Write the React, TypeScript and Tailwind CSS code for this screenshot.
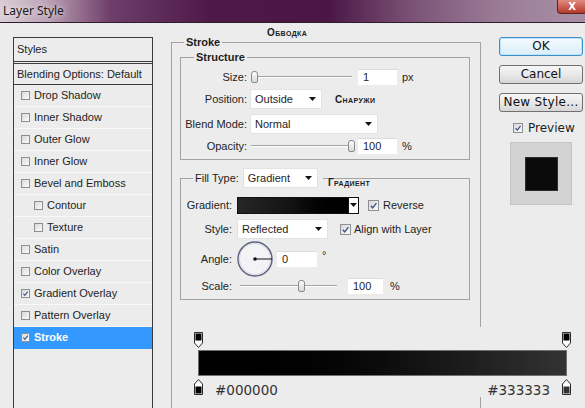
import type { ReactNode } from "react";

const LEFT_ITEMS: { label: string; on?: boolean; indent?: boolean; active?: boolean }[] = [
  { label: "Drop Shadow" },
  { label: "Inner Shadow" },
  { label: "Outer Glow" },
  { label: "Inner Glow" },
  { label: "Bevel and Emboss" },
  { label: "Contour", indent: true },
  { label: "Texture", indent: true },
  { label: "Satin" },
  { label: "Color Overlay" },
  { label: "Gradient Overlay", on: true },
  { label: "Pattern Overlay" },
  { label: "Stroke", on: true, active: true },
];

function Tick() {
  return (
    <svg viewBox="0 0 10 10" className="w-full h-full">
      <path d="M2 5.3 L4.1 7.6 L8.2 2.3" fill="none" stroke="#3f558f" strokeWidth="1.6" />
    </svg>
  );
}

function Check({ on, size }: { on?: boolean; size: "sm" | "md" | "lg" }) {
  const box =
    size === "sm" ? "w-[9px] h-[9px]" : size === "md" ? "w-[10px] h-[10px]" : "w-[11px] h-[11px]";
  return (
    <span
      className={`${box} shrink-0 flex border border-[#8e8f8f] bg-gradient-to-br from-[#d9d9d9] to-[#fbfbfb]`}
    >
      {on && <Tick />}
    </span>
  );
}

function Arrow() {
  return (
    <svg width="7" height="4" viewBox="0 0 7 4" className="shrink-0">
      <polygon points="0,0 7,0 3.5,4" fill="#151515" />
    </svg>
  );
}

function Select({ value, w }: { value: string; w: string }) {
  return (
    <div
      className={`${w} h-[20px] shrink-0 flex items-center justify-between pl-[4px] pr-[5px] bg-white border border-[#e2e2e2]`}
    >
      <span>{value}</span>
      <Arrow />
    </div>
  );
}

function Field({ value, w }: { value: string; w: string }) {
  return (
    <div className={`${w} h-[16px] shrink-0 flex items-center pl-[5px] bg-white border-t border-[#dadada]`}>
      {value}
    </div>
  );
}

function Slider({ w, thumb }: { w: string; thumb: number }) {
  return (
    <div className={`${w} relative h-[14px] shrink-0`}>
      <div className="absolute left-0 right-0 top-[6px] h-[2px] border-t border-[#a3a3a3] bg-white" />
      <div
        className="absolute top-[1px] w-[7px] h-[12px] rounded-t-[3px] rounded-b-[2px] border border-[#8c8c8c] bg-gradient-to-b from-[#fdfdfd] to-[#d8d8d8]"
        style={{ left: thumb }}
      />
    </div>
  );
}

function Row({ label, lw, className, children }: { label: string; lw: string; className: string; children: ReactNode }) {
  return (
    <div className={`flex items-center ${className}`}>
      <span className={`${lw} shrink-0 text-right`}>{label}</span>
      {children}
    </div>
  );
}

function Stop({ dir, fill }: { dir: "down" | "up"; fill: string }) {
  return (
    <svg width="9" height="16" viewBox="0 0 9 16" className="shrink-0">
      {dir === "down" ? (
        <>
          <path d="M0.5 0.5 H8.5 V11 L4.5 15.5 L0.5 11 Z" fill="#fff" stroke="#2a2a2a" />
          <rect x="1.5" y="1.5" width="6" height="7" fill={fill} />
        </>
      ) : (
        <>
          <path d="M0.5 15.5 H8.5 V5 L4.5 0.5 L0.5 5 Z" fill="#fff" stroke="#2a2a2a" />
          <rect x="1.5" y="7.5" width="6" height="7" fill={fill} />
        </>
      )}
    </svg>
  );
}

function Button({ children, primary, className }: { children: ReactNode; primary?: boolean; className?: string }) {
  return (
    <div
      className={`h-[19px] w-full flex items-center justify-center rounded-[3px] border text-[12px] text-[#111] font-['DejaVu_Sans',sans-serif] ${
        primary
          ? "border-[#3c8fc8] bg-gradient-to-b from-[#f5fbff] to-[#d9edf9] shadow-[inset_0_0_0_1px_#bfe3f8]"
          : "border-[#707070] bg-gradient-to-b from-[#f6f6f6] via-[#e9e9e9] to-[#d6d6d6]"
      } ${className ?? ""}`}
    >
      {children}
    </div>
  );
}

export default function App() {
  return (
    <div className="w-[585px] h-[408px] overflow-hidden bg-[#ececec] text-[11px] leading-[13px] text-[#1e1e1e] font-['Liberation_Sans',Arial,sans-serif]">
      {/* title bar */}
      <div className="h-[23px] flex items-start justify-between border-b border-[#2e1b2c] bg-[linear-gradient(90deg,#d9cfd7_0%,#bba2b6_8%,#6e3d69_19%,#4d1949_36%,#4a1646_56%,#7a5175_70%,#9a7b96_85%,#a98fa5_100%)]">
        <span className="pl-[3px] pt-[4px] text-[12px] leading-[14px] text-[#1a1a1a] font-['Noto_Sans',sans-serif] [text-shadow:0_0_6px_#fff]">
          Layer Style
        </span>
        <div className="w-[30px] h-[14px] -mr-[2px] flex items-center justify-center rounded-bl-[4px] border border-t-0 border-[#5b2420] bg-gradient-to-b from-[#e08a80] to-[#b3372b] text-white text-[10px] leading-[10px] font-bold font-['DejaVu_Sans',sans-serif]">
          X
        </div>
      </div>

      <div className="flex">
        {/* styles list */}
        <div className="ml-[13px] mt-[14px] w-[140px] h-[380px] shrink-0 border border-[#3c3c3c]">
          <div className="h-[26px] pl-[3px] flex items-center border-b-[3px] border-double border-[#3c3c3c]">Styles</div>
          <div className="h-[21px] pl-[3px] flex items-center border-b border-[#3c3c3c]">Blending Options: Default</div>
          {LEFT_ITEMS.map((it) => (
            <div
              key={it.label}
              className={`h-[22px] flex items-center gap-[4px] border-b ${it.indent ? "pl-[20px]" : "pl-[7px]"} ${
                it.active ? "bg-[#3399ff] border-[#3399ff] text-white font-bold" : "border-[#f8f8f8]"
              }`}
            >
              <Check on={it.on} size="sm" />
              <span>{it.label}</span>
            </div>
          ))}
        </div>

        {/* stroke settings */}
        <div className="ml-[18px] w-[310px] shrink-0">
          <div className="mt-[5px] h-[10px] leading-[10px] pl-[96px] text-[10px] font-bold tracking-[0.4px] [font-variant-caps:small-caps]">
            Обводка
          </div>
          <fieldset className="mt-[-2px] w-[310px] min-w-0 h-[380px] border border-[#a3a3a3] pl-[8px] pr-[10px]">
            <legend className="ml-[4px] px-[2px] font-bold leading-[13px]">Stroke</legend>

            <fieldset className="mt-[2px] min-w-0 border border-[#a3a3a3] pb-[2px]">
              <legend className="ml-[13px] px-[2px] font-bold leading-[13px]">Structure</legend>
              <Row label="Size:" lw="w-[66px]" className="mt-[2px] h-[22px]">
                <span className="ml-[4px]">
                  <Slider w="w-[101px]" thumb={0} />
                </span>
                <span className="ml-[6px]">
                  <Field value="1" w="w-[39px]" />
                </span>
                <span className="ml-[5px]">px</span>
              </Row>
              <Row label="Position:" lw="w-[66px]" className="h-[22px]">
                <span className="ml-[3px]">
                  <Select value="Outside" w="w-[72px]" />
                </span>
                <span className="ml-[13px] text-[10px] font-bold tracking-[0.4px] [font-variant-caps:small-caps]">Снаружи</span>
              </Row>
              <Row label="Blend Mode:" lw="w-[66px]" className="mt-[3px] h-[22px]">
                <span className="ml-[3px]">
                  <Select value="Normal" w="w-[128px]" />
                </span>
              </Row>
              <Row label="Opacity:" lw="w-[66px]" className="h-[22px]">
                <span className="ml-[4px]">
                  <Slider w="w-[101px]" thumb={97} />
                </span>
                <span className="ml-[6px]">
                  <Field value="100" w="w-[39px]" />
                </span>
                <span className="ml-[5px]">%</span>
              </Row>
            </fieldset>

            <fieldset className="mt-[8px] min-w-0 border border-[#a3a3a3] pb-[4px]">
              <legend className="ml-[12px] pl-[2px] pr-[5px]">
                <span className="flex items-center">
                  <span>Fill Type:</span>
                  <span className="ml-[4px]">
                    <Select value="Gradient" w="w-[75px]" />
                  </span>
                </span>
              </legend>
              <div className="mt-[-11px] h-[12px] leading-[12px] pl-[147px] text-[10px] font-bold tracking-[0.4px] [font-variant-caps:small-caps]">
                Градиент
              </div>
              <Row label="Gradient:" lw="w-[51px]" className="mt-[6px] h-[20px]">
                <div className="ml-[5px] w-[122px] h-[17px] flex border border-[#111]">
                  <div className="flex-1 bg-gradient-to-r from-[#262626] via-[#121212] to-black" />
                  <div className="w-[10px] flex items-center justify-center bg-white border-l border-[#111]">
                    <Arrow />
                  </div>
                </div>
                <span className="ml-[9px]">
                  <Check on size="lg" />
                </span>
                <span className="ml-[4px]">Reverse</span>
              </Row>
              <Row label="Style:" lw="w-[51px]" className="mt-[3px] h-[22px]">
                <span className="ml-[5px]">
                  <Select value="Reflected" w="w-[91px]" />
                </span>
                <span className="ml-[12px]">
                  <Check on size="lg" />
                </span>
                <span className="ml-[3px]">Align with Layer</span>
              </Row>
              <Row label="Angle:" lw="w-[51px]" className="mt-[1px] h-[36px]">
                <svg width="36" height="36" viewBox="0 0 36 36" className="ml-[5px] shrink-0">
                  <circle cx="18" cy="18" r="17" fill="#f3f3f5" stroke="#5d6280" strokeWidth="1.4" />
                  <circle cx="18" cy="18" r="15.6" fill="none" stroke="#d7d8e0" strokeWidth="1" />
                  <line x1="18" y1="18" x2="35" y2="18" stroke="#111" strokeWidth="1" />
                  <circle cx="18" cy="18" r="1.8" fill="#111" />
                </svg>
                <span className="ml-[4px]">
                  <Field value="0" w="w-[40px]" />
                </span>
                <span className="ml-[5px] self-start mt-[8px]">°</span>
              </Row>
              <Row label="Scale:" lw="w-[51px]" className="h-[18px]">
                <span className="ml-[8px]">
                  <Slider w="w-[97px]" thumb={58} />
                </span>
                <span className="ml-[11px]">
                  <Field value="100" w="w-[35px]" />
                </span>
                <span className="ml-[7px]">%</span>
              </Row>
            </fieldset>

            {/* gradient editor */}
            <div className="mt-[27px] ml-[10px] w-[385px] h-[70px] bg-[#ececec] px-[8px] pt-[5px]">
              <div className="mx-[-4px] h-[16px] flex justify-between">
                <Stop dir="down" fill="#000" />
                <Stop dir="down" fill="#000" />
              </div>
              <div className="mt-[2px] h-[26px] border border-[#6f6f6f] bg-gradient-to-r from-black via-[#0c0c0c] to-[#333333]" />
              <div className="mt-[2px] mx-[-4px] h-[17px] flex items-end justify-between">
                <div className="flex items-end">
                  <Stop dir="up" fill="#000" />
                  <span className="ml-[12px] mb-[-3px] text-[13.5px] leading-[16px] text-[#333] font-['DejaVu_Sans',sans-serif]">
                    #000000
                  </span>
                </div>
                <div className="flex items-end">
                  <span className="mr-[12px] mb-[-3px] text-[13.5px] leading-[16px] text-[#333] font-['DejaVu_Sans',sans-serif]">
                    #333333
                  </span>
                  <Stop dir="up" fill="#333" />
                </div>
              </div>
            </div>
          </fieldset>
        </div>

        {/* buttons */}
        <div className="ml-[18px] w-[84px] shrink-0 pt-[14px]">
          <Button primary>OK</Button>
          <Button className="mt-[9px]">Cancel</Button>
          <Button className="mt-[9px] tracking-[0.3px]">New Style...</Button>
          <div className="mt-[9px] h-[14px] pl-[14px] flex items-center gap-[5px] text-[12px] font-['DejaVu_Sans',sans-serif]">
            <Check on size="md" />
            <span>Preview</span>
          </div>
          <div className="mt-[7px] ml-[11px] w-[62px] h-[63px] flex items-center justify-center bg-[#d3d3d3] border border-[#c4c4c4]">
            <div className="w-[33px] h-[34px] bg-[#0b0b0b] border border-[#2c2c2c]" />
          </div>
        </div>
      </div>
    </div>
  );
}
